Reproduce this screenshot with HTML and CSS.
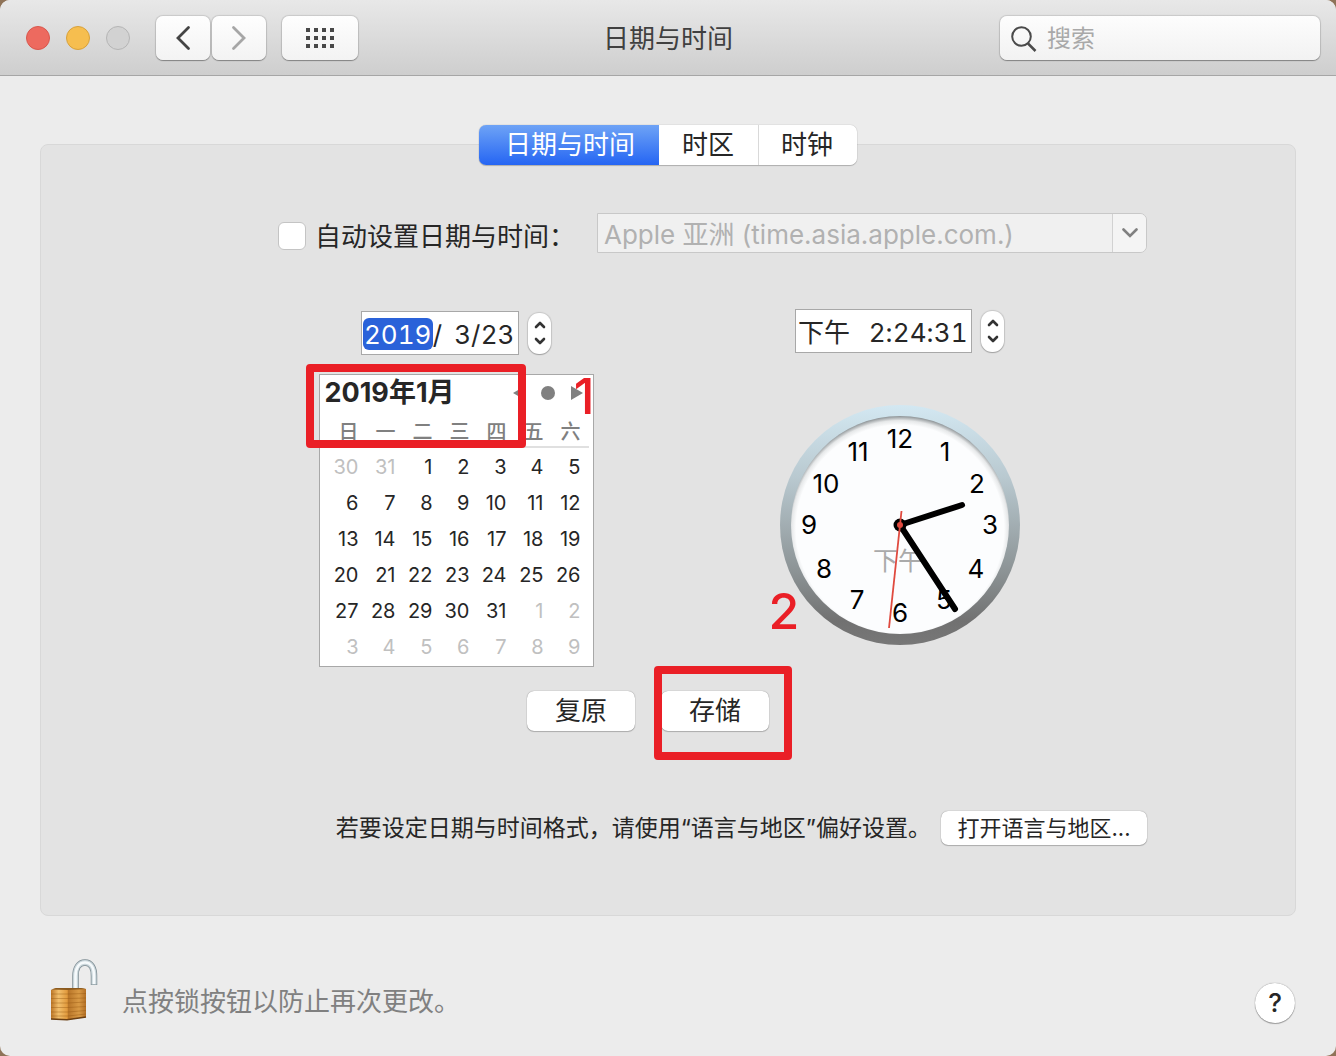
FILE: index.html
```html
<!DOCTYPE html>
<html lang="zh-CN">
<head>
    <meta charset="UTF-8">
    <meta name="viewport" content="width=device-width, initial-scale=1.0">
    <title>日期与时间</title>
    <link rel="stylesheet" href="styles.css">
</head>
<body>
    <div class="window">
        <header class="titlebar">
            <div class="toolbar">
                <div class="lights">
                    <button class="light close" aria-label="关闭"></button>
                    <button class="light minimize" aria-label="最小化"></button>
                    <button class="light zoom" aria-label="缩放" disabled></button>
                </div>
                <div class="history">
                    <button class="tool" aria-label="后退">
                        <svg width="16" height="26" viewBox="0 0 16 26"><path d="M13.500 2.500 3 13 13.500 23.500" fill="none" stroke="#444" stroke-width="2.800" stroke-linecap="round" /></svg>
                    </button>
                    <button class="tool" aria-label="前进" disabled>
                        <svg width="16" height="26" viewBox="0 0 16 26"><path d="M2.500 2.500 13 13 2.500 23.500" fill="none" stroke="#a6a6a6" stroke-width="2.800" stroke-linecap="round" /></svg>
                    </button>
                </div>
                <button class="tool show-all" aria-label="显示全部">
                    <svg width="28" height="20" viewBox="0 0 28 20" fill="#484848">
                        <path d="M0 0h4v4H0zM8 0h4v4H8zM16 0h4v4h-4zM24 0h4v4h-4zM0 8h4v4H0zM8 8h4v4H8zM16 8h4v4h-4zM24 8h4v4h-4zM0 16h4v4H0zM8 16h4v4H8zM16 16h4v4h-4zM24 16h4v4h-4z" />
                    </svg>
                </button>
            </div>
            <h1>日期与时间</h1>
            <label class="search">
                <svg width="26" height="26" viewBox="0 0 26 26" fill="none" stroke="#4a4a4a" stroke-width="2"><circle cx="10.500" cy="10.500" r="9.300" /><path d="M17 17.500 24.500 25" stroke-width="2.500" /></svg>
                <input type="search" placeholder="搜索" aria-label="搜索">
            </label>
        </header>

        <main>
            <nav class="tabs" role="tablist">
                <button class="tab active" role="tab" aria-selected="true">日期与时间</button>
                <button class="tab" role="tab" aria-selected="false">时区</button>
                <button class="tab" role="tab" aria-selected="false">时钟</button>
            </nav>

            <section class="panel">
                <div class="server-row">
                    <input type="checkbox" id="auto" class="checkbox">
                    <label for="auto">自动设置日期与时间：</label>
                    <div class="combo">
                        <select aria-label="时间服务器" disabled>
                            <option>Apple 亚洲 (time.asia.apple.com.)</option>
                        </select>
                        <span class="combo-arrow">
                            <svg width="16" height="10" viewBox="0 0 16 10"><path d="M1.500 1.500 8 8l6.500-6.500" fill="none" stroke="#808080" stroke-width="2.600" stroke-linecap="round" /></svg>
                        </span>
                    </div>
                </div>

                <div class="columns">
                    <div class="date-column">
                        <div class="field-row">
                            <div class="field">
                                <input class="year selected" value="2019" aria-label="年"><span>/</span><input class="month" value="3" aria-label="月"><span>/</span><input class="two" value="23" aria-label="日">
                            </div>
                            <button class="stepper" aria-label="调整日期">
                                <svg width="12" height="26" viewBox="0 0 12 26" fill="none" stroke="#333" stroke-width="2.600" stroke-linecap="round" stroke-linejoin="round"><path d="M2 7 6 3l4 4M2 19l4 4 4-4" /></svg>
                            </button>
                        </div>

                        <div class="calendar">
                            <div class="calendar-head">
                                <h2>2019年1月</h2>
                                <div class="calendar-nav">
                                    <button aria-label="上个月"><svg width="12" height="14" viewBox="0 0 12 14"><path d="M12 0v14L0 7z" /></svg></button>
                                    <button aria-label="今天"><svg width="14" height="14" viewBox="0 0 14 14"><circle cx="7" cy="7" r="7" /></svg></button>
                                    <button aria-label="下个月"><svg width="12" height="14" viewBox="0 0 12 14"><path d="M0 0v14l12-7z" /></svg></button>
                                </div>
                            </div>
                            <table>
                                <thead>
                                    <tr><th>日</th><th>一</th><th>二</th><th>三</th><th>四</th><th>五</th><th>六</th></tr>
                                </thead>
                                <tbody>
                                    <tr><td class="out">30</td><td class="out">31</td><td>1</td><td>2</td><td>3</td><td>4</td><td>5</td></tr>
                                    <tr><td>6</td><td>7</td><td>8</td><td>9</td><td>10</td><td>11</td><td>12</td></tr>
                                    <tr><td>13</td><td>14</td><td>15</td><td>16</td><td>17</td><td>18</td><td>19</td></tr>
                                    <tr><td>20</td><td>21</td><td>22</td><td>23</td><td>24</td><td>25</td><td>26</td></tr>
                                    <tr><td>27</td><td>28</td><td>29</td><td>30</td><td>31</td><td class="out">1</td><td class="out">2</td></tr>
                                    <tr><td class="out">3</td><td class="out">4</td><td class="out">5</td><td class="out">6</td><td class="out">7</td><td class="out">8</td><td class="out">9</td></tr>
                                </tbody>
                            </table>
                            <div class="mark mark-month"></div>
                            <span class="step step-one">1</span>
                        </div>
                    </div>

                    <div class="time-column">
                        <div class="field-row">
                            <div class="field">
                                <input class="period" value="下午" aria-label="上午或下午"><input class="hour" value="2" aria-label="时"><span>:</span><input class="two" value="24" aria-label="分"><span>:</span><input class="two" value="31" aria-label="秒">
                            </div>
                            <button class="stepper" aria-label="调整时间">
                                <svg width="12" height="26" viewBox="0 0 12 26" fill="none" stroke="#333" stroke-width="2.600" stroke-linecap="round" stroke-linejoin="round"><path d="M2 7 6 3l4 4M2 19l4 4 4-4" /></svg>
                            </button>
                        </div>

                        <div class="clock">
                            <svg width="240" height="240" viewBox="0 0 240 240">
                                <defs>
                                    <linearGradient id="rim" x1="0" y1="0" x2="0" y2="1">
                                        <stop offset="0" stop-color="#d3e8f2" />
                                        <stop offset="0.300" stop-color="#b9c9d0" />
                                        <stop offset="0.700" stop-color="#8b9294" />
                                        <stop offset="0.900" stop-color="#717171" />
                                        <stop offset="1" stop-color="#777" />
                                    </linearGradient>
                                    <radialGradient id="face" gradientUnits="userSpaceOnUse" cx="120" cy="124" r="113">
                                        <stop offset="0.920" stop-color="#fcfdfe" />
                                        <stop offset="0.960" stop-color="#e6e8e9" />
                                        <stop offset="1" stop-color="#8c9295" />
                                    </radialGradient>
                                </defs>
                                <circle cx="120" cy="120" r="120" fill="url(#rim)" />
                                <circle cx="120" cy="120" r="109" fill="url(#face)" />
                                <g class="numerals">
                                    <text x="120" y="43">12</text>
                                    <text x="165" y="56">1</text>
                                    <text x="197" y="88">2</text>
                                    <text x="210" y="129">3</text>
                                    <text x="196" y="173">4</text>
                                    <text x="164" y="204">5</text>
                                    <text x="120" y="217">6</text>
                                    <text x="77" y="204">7</text>
                                    <text x="44" y="173">8</text>
                                    <text x="29" y="129">9</text>
                                    <text x="46" y="88">10</text>
                                    <text x="78" y="56">11</text>
                                </g>
                                <text class="clock-period" x="118" y="165">下午</text>
                                <g stroke="#000" stroke-width="6" stroke-linecap="round">
                                    <path d="M120 120 182 100" />
                                    <path d="M120 120 175 204" />
                                </g>
                                <circle cx="120" cy="120" r="6.500" />
                                <circle cx="120" cy="120" r="3" fill="#e04a3f" />
                                <path d="M121.500 106 109 223" stroke="#e04a3f" stroke-width="1.800" />
                            </svg>
                            <span class="step step-two">2</span>
                        </div>
                    </div>
                </div>

                <div class="actions">
                    <button class="push">复原</button>
                    <div class="save">
                        <button class="push">存储</button>
                        <div class="mark mark-save"></div>
                    </div>
                </div>

                <div class="format-row">
                    <p>若要设定日期与时间格式，请使用“语言与地区”偏好设置。</p>
                    <button class="push small">打开语言与地区...</button>
                </div>
            </section>
        </main>

        <footer>
            <button class="lock" aria-label="锁定">
                <svg width="48" height="62" viewBox="0 0 48 62">
                    <defs>
                        <linearGradient id="brass" x1="0" x2="1">
                            <stop offset="0" stop-color="#bd7727" />
                            <stop offset="0.220" stop-color="#f2bf6c" />
                            <stop offset="0.460" stop-color="#e19a3d" />
                            <stop offset="0.500" stop-color="#b97629" />
                            <stop offset="0.800" stop-color="#d99a45" />
                            <stop offset="1" stop-color="#b36f25" />
                        </linearGradient>
                    </defs>
                    <path d="M25.500 31V17c0-8 3.500-13.500 9.500-13.500S44 9 44 17v9" fill="none" stroke="#7d8c93" stroke-width="6.500" />
                    <path d="M25.500 31V17c0-8 3.500-13.500 9.500-13.500S44 9 44 17v8.500" fill="none" stroke="#c9d5da" stroke-width="5" />
                    <path d="M25.500 30V17c0-8 3.500-13.500 9.500-13.500S44 9 44 17v8" fill="none" stroke="#f6fafc" stroke-width="2.600" />
                    <path d="M1 31 6 29h25l5 1v28l-19 3-16-1z" fill="url(#brass)" />
                    <path d="M1 35h17l18-.5M1 39.500h17l18-.5M1 44h17l18-1M1 48.500h17l18-1M1 53h17l18-1.500M1 57h17l18-2" fill="none" stroke="#94560f" stroke-opacity="0.400" stroke-width="1" />
                    <path d="M1 30.500 6 29h25l5 1-18 1z" fill="#8b5a1f" />
                    <path d="M1 60 17 60.800 36 58" fill="none" stroke="#6b3f12" stroke-width="1.400" />
                </svg>
            </button>
            <p>点按锁按钮以防止再次更改。</p>
            <button class="help" aria-label="帮助">?</button>
        </footer>
    </div>
</body>
</html>
```
FILE: styles.css
```css
* {
    box-sizing: border-box;
}
body {
    margin: 0;
    background-color: #8f7358; /* Desktop behind the window corners */
    color: #262626;
    font-family: Inter, 'Noto Sans CJK SC', sans-serif;
    font-size: 26px;
    line-height: 32px;
}
button, input, select {
    margin: 0;
    padding: 0;
    border: 0;
    font: inherit;
    color: inherit;
}
h1, h2, p {
    margin: 0;
}
svg {
    display: block;
}
.window {
    display: flex;
    flex-direction: column;
    min-height: 100vh;
    border-radius: 10px;
    background-color: #ececec;
    overflow: hidden;
}

/* Title bar */
.titlebar {
    display: grid;
    grid-template-columns: 1fr auto 1fr;
    align-items: center;
    height: 76px;
    padding: 0 16px 0 26px;
    border-bottom: 1px solid #a6a6a6;
    background: linear-gradient(#e8e8e8, #cecece);
}
.titlebar h1 {
    color: #404040;
    font-size: 26px;
    font-weight: 400;
    padding: 3px 10px 0 0;
}
.toolbar {
    display: flex;
    align-items: center;
}
.lights {
    display: flex;
    gap: 16px;
    margin-right: 26px;
}
.light {
    width: 24px;
    height: 24px;
    border: 1px solid #b5b5b5;
    border-radius: 50%;
}
.close {
    background-color: #ed6a5f;
    border-color: #d9574d;
}
.minimize {
    background-color: #f6be4f;
    border-color: #d8a13b;
}
.zoom {
    background-color: #d2d2d2;
}
.history {
    display: flex;
    gap: 2px;
    margin-right: 16px;
}
.tool {
    display: flex;
    align-items: center;
    justify-content: center;
    width: 54px;
    height: 44px;
    border-radius: 7px;
    background: linear-gradient(#fefefe, #f3f3f3);
    box-shadow: 0 0 1px 1px rgba(0, 0, 0, 0.12), 0 1px 1px rgba(0, 0, 0, 0.3);
}
.show-all {
    width: 76px;
}
.search {
    display: flex;
    align-items: center;
    justify-self: end;
    gap: 10px;
    width: 320px;
    height: 44px;
    padding: 2px 11px 0;
    border-radius: 7px;
    background: linear-gradient(#fdfdfd, #f2f2f2);
    box-shadow: 0 0 1px 1px rgba(0, 0, 0, 0.12), 0 1px 1px rgba(0, 0, 0, 0.3);
}
.search input {
    flex: 1;
    min-width: 0;
    background: none;
    font-size: 24px;
}
.search input::placeholder {
    color: #a9a9a9;
}

/* Tabs and panel */
main {
    padding: 49px 40px 0;
}
.tabs {
    position: relative;
    display: flex;
    width: max-content;
    margin: 0 auto;
    border-radius: 7px;
    box-shadow: 0 0 1px rgba(0, 0, 0, 0.4), 0 1px 1px rgba(0, 0, 0, 0.2);
    overflow: hidden;
}
.tab {
    height: 40px;
    padding: 0 24px 0 23px;
    background-color: #fff;
}
.tab + .tab + .tab {
    padding-left: 22px;
    border-left: 1px solid #d9d9d9;
}
.tab.active {
    padding: 0 24px 0 26px;
    background: linear-gradient(#6ea3f6, #2565f3);
    color: #fff;
}
.panel {
    margin-top: -21px;
    padding: 68px 148px 70px 0;
    border: 1px solid #d8d8d8;
    border-radius: 8px;
    background-color: #e3e3e3;
}
.server-row, .format-row {
    display: flex;
    align-items: center;
    justify-content: flex-end;
}
.checkbox {
    appearance: none;
    width: 28px;
    height: 28px;
    margin: 6px 9px 0 0;
    border: 1px solid #c4c4c4;
    border-radius: 6px;
    background-color: #fff;
}
.server-row label {
    padding-top: 8px;
}
.combo {
    position: relative;
    width: 550px;
    height: 40px;
    margin-left: 22px;
}
.combo select {
    appearance: none;
    width: 100%;
    height: 100%;
    padding: 3px 40px 0 6px;
    border: 1px solid #c8c8c8;
    border-radius: 0 7px 7px 0;
    background-color: #f0f0f0;
    color: #b1b1b1;
    opacity: 1;
}
.combo-arrow {
    position: absolute;
    top: 1px;
    right: 1px;
    bottom: 1px;
    display: flex;
    align-items: center;
    justify-content: center;
    width: 34px;
    border-left: 1px solid #d2d2d2;
    border-radius: 0 6px 6px 0;
    background-color: #f4f4f4;
}

/* Date and time columns */
.columns {
    display: flex;
    justify-content: center;
    gap: 186px;
    margin: 56px -150px 0 0;
}
.date-column {
    width: 275px;
    padding-top: 2px;
}
.time-column {
    width: 240px;
}
.field-row {
    display: flex;
    align-items: center;
    justify-content: center;
    gap: 9px;
}
.field {
    display: flex;
    align-items: center;
    height: 44px;
    padding: 1px 4px 0 1px;
    border: 1px solid #a8a8a8;
    background-color: #fff;
    font-variant-numeric: tabular-nums;
}
.field input {
    height: 32px;
    padding-top: 2px;
    background: none;
    text-align: right;
}
.field span {
    padding-top: 2px;
}
.field .year {
    width: 70px;
    text-align: center;
}
.field .selected {
    border-radius: 6px;
    background-color: #2a62d9;
    color: #fff;
}
.field .month {
    width: 29px;
}
.field .two {
    width: 34px;
}
.field .period {
    width: 55px;
    text-align: center;
}
.field .hour {
    width: 34px;
}
.stepper {
    display: flex;
    align-items: center;
    justify-content: center;
    width: 23px;
    height: 41px;
    border-radius: 11px;
    background-color: #fff;
    box-shadow: 0 0 1px 1px rgba(0, 0, 0, 0.12), 0 1px 1px rgba(0, 0, 0, 0.2);
}

/* Calendar */
.calendar {
    position: relative;
    margin-top: 19px;
    padding: 0 4px 3px 5px;
    border: 1px solid #a8a8a8;
    background-color: #fff;
}
.calendar-head {
    display: flex;
    align-items: center;
    justify-content: space-between;
    height: 36px;
    padding-right: 6px;
}
.calendar-head h2 {
    font-size: 27px;
    font-weight: 700;
}
.calendar-nav {
    position: relative;
    z-index: 1;
    display: flex;
    gap: 16px;
}
.calendar-nav button {
    background: none;
    fill: #808080;
}
.calendar table {
    width: 259px;
    margin-left: auto;
    border-collapse: collapse;
    table-layout: fixed;
    font-size: 20px;
    line-height: 20px;
}
.calendar th {
    height: 36px;
    padding: 6px 8px 0 0;
    border-bottom: 2px solid #e0e0e0;
    color: #808080;
    font-weight: 500;
    text-align: right;
}
.calendar td {
    height: 36px;
    padding: 3px 8px 0 0;
    text-align: right;
}
.calendar .out {
    color: #c0c0c0;
}

/* Clock */
.clock {
    position: relative;
    margin-top: 52px;
}
.numerals {
    fill: #000;
    text-anchor: middle;
}
.clock-period {
    fill: #aaa;
    font-size: 25px;
    text-anchor: middle;
}

/* Red marks for the steps */
.mark {
    position: absolute;
    z-index: 2;
    border: 8px solid #ea1f26;
    border-radius: 4px;
    pointer-events: none;
}
.mark-month {
    top: -11px;
    left: -14px;
    width: 220px;
    height: 84px;
}
.mark-save {
    top: -25px;
    left: -7px;
    width: 138px;
    height: 94px;
}
.step {
    position: absolute;
    color: #ea1f26;
    font-size: 50px;
    font-weight: 500;
    line-height: 36px;
}
.step-one {
    top: 3px;
    right: -2px;
}
.step-two {
    top: 188px;
    left: -11px;
}

/* Push buttons */
.actions {
    display: flex;
    justify-content: center;
    gap: 26px;
    margin: 24px -108px 0 0;
}
.save {
    position: relative;
}
.push {
    width: 108px;
    height: 40px;
    border-radius: 7px;
    background-color: #fff;
    box-shadow: 0 0 1px rgba(0, 0, 0, 0.5), 0 1px 1px rgba(0, 0, 0, 0.2);
}
.format-row {
    gap: 10px;
    margin-top: 80px;
    font-size: 23px;
}
.push.small {
    width: 206px;
    height: 34px;
    font-size: 22px;
}

/* Footer */
footer {
    display: flex;
    align-items: flex-end;
    padding: 43px 41px 33px 50px;
}
footer p {
    flex: 1;
    padding: 0 24px 5px;
    color: #808080;
}
.lock {
    padding-bottom: 2px;
    background: none;
}
.help {
    width: 40px;
    height: 40px;
    border-radius: 50%;
    background-color: #fff;
    box-shadow: 0 0 1px rgba(0, 0, 0, 0.5), 0 1px 1px rgba(0, 0, 0, 0.3);
    font-weight: 500;
}
```
